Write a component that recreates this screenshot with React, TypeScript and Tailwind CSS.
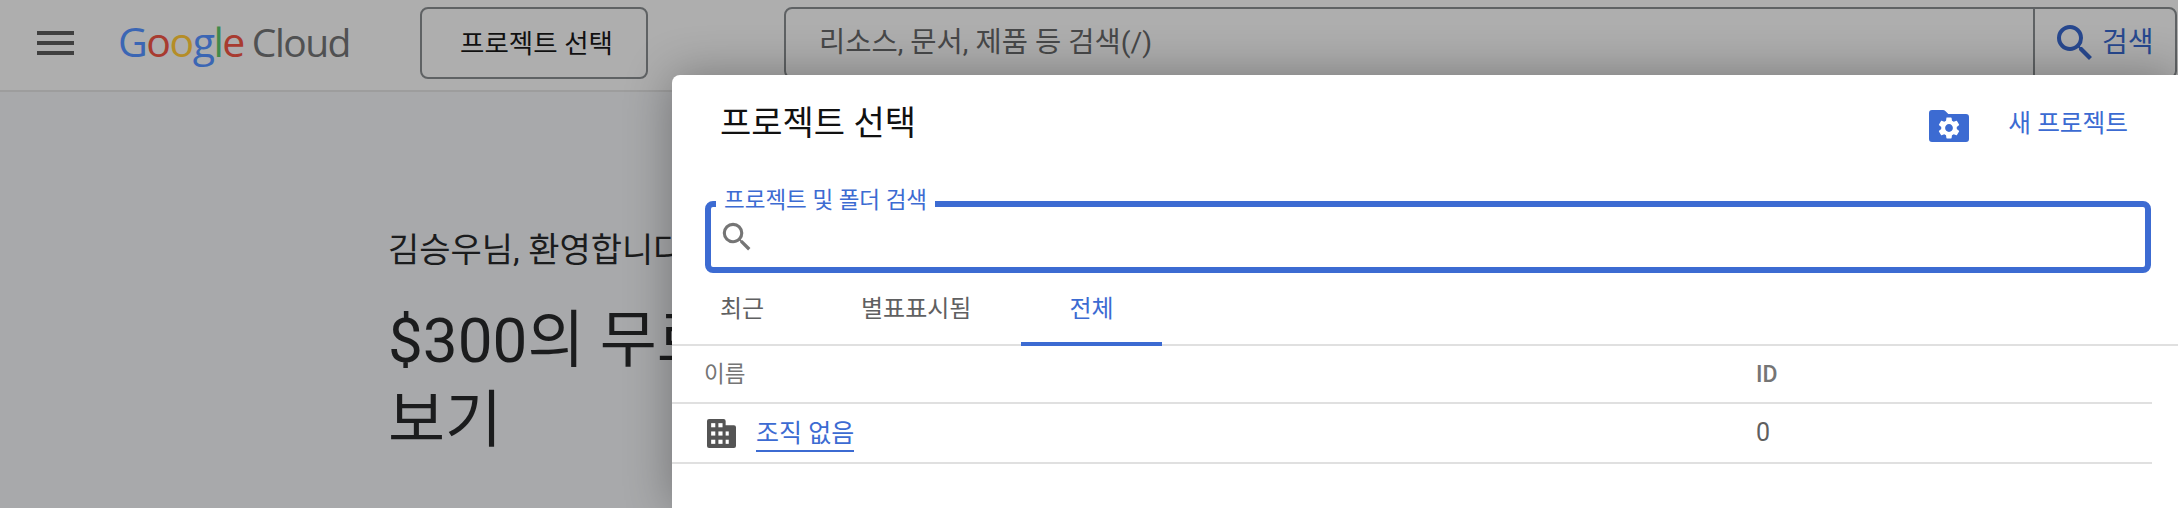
import { MdSearch, MdSettings } from 'react-icons/md';

const fontStack = "font-['Roboto','Noto_Sans_CJK_KR',sans-serif]";

function Logo() {
  return (
    <div className="flex items-baseline font-['Open_Sans','Noto_Sans_CJK_KR',sans-serif] text-[41px] leading-none">
      <span className="tracking-[-1.5px]">
        <span className="text-[#3b66b4]">G</span>
        <span className="text-[#a83b30]">o</span>
        <span className="text-[#b58d27]">o</span>
        <span className="text-[#3b66b4]">g</span>
        <span className="text-[#3f8a4b]">l</span>
        <span className="text-[#a83b30]">e</span>
      </span>
      <span className="ml-[8px] text-[39px] tracking-[-1.5px] text-[#505152]">Cloud</span>
    </div>
  );
}

function Header() {
  return (
    <header className="flex h-[92px] shrink-0 items-start border-b-2 border-[#9d9d9d] bg-[#aeaeae]">
      <div className="ml-[37px] mt-[31px] flex h-[24px] w-[37px] flex-col justify-between">
        <div className="h-[4px] bg-[#3f3f3f]" />
        <div className="h-[4px] bg-[#3f3f3f]" />
        <div className="h-[4px] bg-[#3f3f3f]" />
      </div>
      <div className="ml-[44px] mt-[21px] w-[302px]">
        <Logo />
      </div>
      <button className="mt-[7px] flex h-[72px] w-[228px] items-center justify-center rounded-[8px] border-2 border-[#5f6264] pl-[5px] pt-[2px] text-[26.500px] text-[#111]">
        프로젝트 선택
      </button>
      <div className="ml-[136px] mr-[1px] mt-[7px] flex h-[72px] flex-1 rounded-[8px] border-2 border-[#5f6264]">
        <div className="flex flex-1 items-center pl-[33px] text-[28.500px] text-[#474849]">리소스, 문서, 제품 등 검색(/)</div>
        <div className="flex w-[142px] items-center border-l-2 border-[#5f6264] pl-[16px] text-[28px] text-[#27488f]">
          <MdSearch size={48} />
          <span className="ml-[3px]">검색</span>
        </div>
      </div>
    </header>
  );
}

function Welcome() {
  return (
    <main className="w-[672px] flex-1 overflow-hidden whitespace-nowrap bg-[#a8a9ab] pl-[388px] pt-[132px] text-[#1b1c1d]">
      <p className="text-[34px] leading-[52px]">김승우님, 환영합니다</p>
      <h1 className="mt-[25px] text-[62px] leading-[80px]">
        $300의 무료 크레딧
        <br />
        보기
      </h1>
    </main>
  );
}

function FolderGear() {
  return (
    <div className="relative mt-[5px] h-[32px] w-[40px]">
      <svg viewBox="0 0 40 32" className="h-[32px] w-[40px] fill-[#3c6bd2]">
        <path d="M3 0h11c1 0 1.600.4 2.300 1l3 3h17.700a3 3 0 0 1 3 3v22a3 3 0 0 1-3 3h-34a3 3 0 0 1-3-3v-26a3 3 0 0 1 3-3z" />
      </svg>
      <MdSettings size={26} className="absolute left-[7px] top-[5px] text-white" />
    </div>
  );
}

function BuildingIcon() {
  return (
    <svg viewBox="0 0 28 28" className="h-[29px] w-[29px] fill-[#545454]">
      <path d="M2 0h14a2 2 0 0 1 2 2v4h8a2 2 0 0 1 2 2v18a2 2 0 0 1-2 2H2a2 2 0 0 1-2-2V2a2 2 0 0 1 2-2z" />
      <g className="fill-white">
        <rect x="4" y="4" width="4" height="4" />
        <rect x="11" y="4" width="4" height="4" />
        <rect x="4" y="12" width="4" height="4" />
        <rect x="11" y="12" width="4" height="4" />
        <rect x="18" y="12" width="3" height="4" />
        <rect x="4" y="20" width="4" height="4" />
        <rect x="11" y="20" width="4" height="4" />
        <rect x="18" y="20" width="3" height="4" />
      </g>
    </svg>
  );
}

function ProjectDialog() {
  return (
    <section className="absolute bottom-0 left-[672px] right-0 top-[75px] rounded-tl-[8px] bg-white shadow-[0_0_48px_rgba(0,0,0,0.32)]">
      <div className="flex h-[80px] items-center pl-[48px] pr-[50px] pt-[16px]">
        <h2 className="flex-1 text-[34px] text-[#111]">프로젝트 선택</h2>
        <FolderGear />
        <span className="ml-[39px] mt-[1px] text-[24.700px] text-[#3c6bd2]">새 프로젝트</span>
      </div>
      <div className="relative ml-[33px] mr-[27px] mt-[46px] h-[72px] rounded-[8px] border-[6px] border-[#3c6bd2]">
        <span className="absolute left-[5px] top-[-21px] bg-white px-[8px] text-[22.500px] leading-[28px] text-[#3c6bd2]">프로젝트 및 폴더 검색</span>
        <MdSearch size={38} className="absolute left-[7px] top-[11px] text-[#757575]" />
      </div>
      <div className="mt-[18px] flex h-[55px] border-b-2 border-[#e0e0e0] text-[24px]">
        <div className="ml-[48px] w-[141px] leading-[36px] text-[#5f6061]">최근</div>
        <div className="w-[160px] leading-[36px] text-[#5f6061]">별표표시됨</div>
        <div className="relative -mb-[2px] flex h-[55px] w-[141px] justify-center border-b-4 border-[#3c6bd2] leading-[36px] text-[#3c6bd2]">전체</div>
      </div>
      <div className="mr-[26px] grid grid-cols-[1084px_1fr]">
        <div className="flex h-[58px] items-center border-b-2 border-[#e0e0e0] pl-[32px] pt-[2px] text-[22.500px] text-[#757575]">이름</div>
        <div className="flex h-[58px] items-center border-b-2 border-[#e0e0e0] pt-[2px] text-[23px] font-medium text-[#757575]">ID</div>
        <div className="flex h-[60px] items-center border-b-2 border-[#e0e0e0] pl-[35px]">
          <BuildingIcon />
          <a className="ml-[20px] mt-[4px] border-b-2 border-[#3c6bd2] text-[25px] leading-[32px] text-[#3c6bd2]">조직 없음</a>
        </div>
        <div className="flex h-[60px] items-center border-b-2 border-[#e0e0e0] text-[25px] text-[#5f5f5f]">0</div>
      </div>
    </section>
  );
}

export default function App() {
  return (
    <div className={`relative flex h-[508px] w-[2178px] flex-col overflow-hidden bg-[#a8a9ab] ${fontStack}`}>
      <Header />
      <Welcome />
      <ProjectDialog />
    </div>
  );
}
